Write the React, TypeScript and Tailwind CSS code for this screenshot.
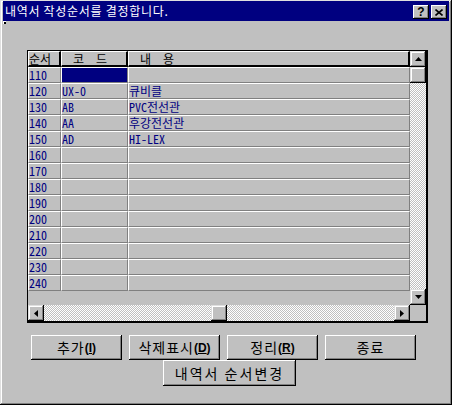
import React from 'react';

const rows = [
  { no: 110, code: '', name: '', sel: true },
  { no: 120, code: 'UX-0', name: '큐비클' },
  { no: 130, code: 'AB', name: 'PVC전선관' },
  { no: 140, code: 'AA', name: '후강전선관' },
  { no: 150, code: 'AD', name: 'HI-LEX' },
  { no: 160, code: '', name: '' },
  { no: 170, code: '', name: '' },
  { no: 180, code: '', name: '' },
  { no: 190, code: '', name: '' },
  { no: 200, code: '', name: '' },
  { no: 210, code: '', name: '' },
  { no: 220, code: '', name: '' },
  { no: 230, code: '', name: '' },
  { no: 240, code: '', name: '' },
];

const Arrow = ({ dir }: { dir: 'up' | 'down' | 'left' | 'right' }) => {
  const pts = {
    up: '3.5,0 7,4 0,4',
    down: '0,0 7,0 3.5,4',
    left: '4,0 4,7 0,3.5',
    right: '0,0 4,3.5 0,7',
  }[dir];
  const vertical = dir === 'up' || dir === 'down';
  return (
    <svg width={vertical ? 7 : 4} height={vertical ? 4 : 7} viewBox={vertical ? '0 0 7 4' : '0 0 4 7'}>
      <polygon points={pts} fill="#000" />
    </svg>
  );
};

const ScrollBtn = ({ dir }: { dir?: 'up' | 'down' | 'left' | 'right' }) => (
  <div className="w-[16px] h-[16px] shrink-0 flex items-center justify-center bg-[#c0c0c0] shadow-[inset_-1px_-1px_#000,inset_1px_1px_#dfdfdf,inset_-2px_-2px_#808080,inset_2px_2px_#fff]">
    {dir && <Arrow dir={dir} />}
  </div>
);

const Track = ({ className = '' }: { className?: string }) => (
  <div className={`bg-[conic-gradient(#fff_25%,#c0c0c0_0_50%,#fff_0_75%,#c0c0c0_0)] bg-[length:2px_2px] ${className}`} />
);

const Button = ({ children, className = '' }: { children: React.ReactNode; className?: string }) => (
  <div className={`flex items-center justify-center bg-[#c0c0c0] text-black text-[14px] shadow-[inset_-1px_-1px_#000,inset_1px_1px_#fff,inset_-2px_-2px_#808080] ${className}`}>
    {children}
  </div>
);

const Key = ({ k }: { k: string }) => (
  <span className="font-['Liberation_Sans',sans-serif] font-bold text-[12px] tracking-normal">
    (<span className="underline">{k}</span>)
  </span>
);

export default function App() {
  return (
    <div className="w-[452px] h-[405px] bg-[#c0c0c0] px-[3px] pt-[1px] shadow-[inset_-1px_-1px_#000,inset_1px_1px_#dfdfdf,inset_-2px_-2px_#808080,inset_2px_2px_#fff] font-['Noto_Sans_CJK_KR',sans-serif]">
      {/* Title bar */}
      <div className="h-[20px] bg-[#000080] flex items-start justify-between px-[2px]">
        <span className="text-white text-[12px] leading-[20px] tracking-[0.7px] whitespace-pre">내역서 작성순서를 결정합니다.</span>
        <div className="flex gap-[2px] pt-[4px]">
          <div className="w-[16px] h-[14px] flex items-center justify-center bg-[#c0c0c0] shadow-[inset_-1px_-1px_#000,inset_1px_1px_#fff,inset_-2px_-2px_#808080] font-['Liberation_Sans',sans-serif] font-bold text-[12px] leading-none text-black">
            ?
          </div>
          <div className="w-[16px] h-[14px] flex items-center justify-center bg-[#c0c0c0] shadow-[inset_-1px_-1px_#000,inset_1px_1px_#fff,inset_-2px_-2px_#808080]">
            <svg width="8" height="7" viewBox="0 0 8 7">
              <path d="M0.5 0.5 L7.5 6.5 M7.5 0.5 L0.5 6.5" stroke="#000" strokeWidth="1.6" />
            </svg>
          </div>
        </div>
      </div>

      {/* small system mark */}
      <div className="w-[3px] h-[3px] border-l border-t border-white bg-black" />

      {/* Grid */}
      <div className="ml-[24px] mt-[26px] w-[401px] h-[273px] border-t border-l border-r-2 border-b-2 border-black flex flex-col font-['Noto_Sans_Mono_CJK_KR','Liberation_Mono','Noto_Sans_CJK_KR',monospace] text-[12px] leading-[14px]">
        <div className="flex h-[254px]">
          <div className="w-[382px] flex flex-col">
            {/* header */}
            <div className="flex h-[16px] text-black">
              <div className="w-[33px] border-t border-l border-white border-r-2 border-b-2 border-r-black border-b-black whitespace-pre">순서</div>
              <div className="w-[67px] border-t border-l border-white border-r-2 border-b-2 border-r-black border-b-black pl-[11px] whitespace-pre">코  드</div>
              <div className="w-[282px] border-t border-l border-white border-r-2 border-b-2 border-r-black border-b-black pl-[11px] whitespace-pre">내  용</div>
            </div>
            {rows.map((r) => (
              <div key={r.no} className="flex h-[16px] text-[#000080]">
                <div className="w-[33px] border-t border-l border-white border-r border-b border-r-[#808080] border-b-[#808080]">{r.no}</div>
                <div className="w-[67px] border-t border-l border-white border-r border-b border-r-[#808080] border-b-[#808080] whitespace-pre">
                  {r.sel ? <div className="h-full w-full bg-[#000080]" /> : r.code}
                </div>
                <div className="w-[282px] border-t border-l border-white border-r border-b border-r-[#808080] border-b-[#808080] whitespace-pre">{r.name}</div>
              </div>
            ))}
            <div className="flex-1" />
          </div>
          {/* vertical scrollbar */}
          <div className="w-[16px] flex flex-col">
            <ScrollBtn dir="up" />
            <ScrollBtn />
            <Track className="flex-1" />
            <ScrollBtn dir="down" />
          </div>
        </div>
        {/* horizontal scrollbar */}
        <div className="flex h-[16px]">
          <div className="w-[382px] flex">
            <ScrollBtn dir="left" />
            <Track className="w-[167px]" />
            <ScrollBtn />
            <Track className="flex-1" />
            <ScrollBtn dir="right" />
          </div>
          <div className="w-[16px] bg-[#c0c0c0]" />
        </div>
      </div>

      {/* Buttons */}
      <div className="ml-[28px] mt-[12px] flex gap-[7px]">
        <Button className="w-[91px] h-[25px] tracking-[1px]">추가<Key k="I" /></Button>
        <Button className="w-[91px] h-[25px] tracking-[1px]">삭제표시<Key k="D" /></Button>
        <Button className="w-[91px] h-[25px] tracking-[1px]">정리<Key k="R" /></Button>
        <Button className="w-[91px] h-[25px] tracking-[1px]">종료</Button>
      </div>
      <div className="ml-[160px]">
        <Button className="w-[133px] h-[26px] tracking-[2px]">내역서 순서변경</Button>
      </div>
    </div>
  );
}
